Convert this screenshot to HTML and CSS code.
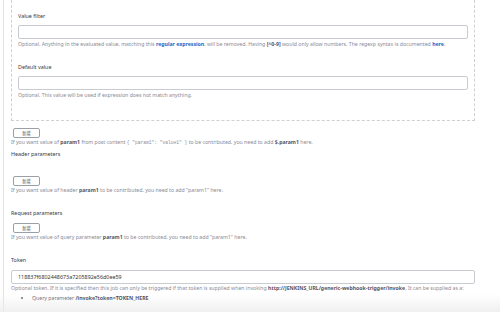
FILE: index.html
```html
<!DOCTYPE html>
<html>
<head>
	<title>Generic Webhook Trigger</title>
	<link rel="stylesheet" href="styles.css">
</head>
<body>
	<div class="page">
		<div class="variable-box">
			<div class="field">
				<div class="label">Value filter</div>
				<input class="text-input" type="text">
				<div class="help">Optional. Anything in the evaluated value, matching this <a href="#">regular expression</a>, will be removed. Having <b>[^0-9]</b> would only allow numbers. The regexp syntax is documented <a href="#">here</a>.</div>
			</div>
			<div class="field">
				<div class="label">Default value</div>
				<input class="text-input" type="text">
				<div class="help">Optional. This value will be used if expression does not match anything.</div>
			</div>
		</div>

		<div class="section first">
			<button class="add-btn">新增</button>
			<div class="help">If you want value of <b>param1</b> from post content <code>{ "param1": "value1" }</code> to be contributed, you need to add <b>$.param1</b> here.</div>
		</div>

		<div class="section header-params">
			<div class="label">Header parameters</div>
			<button class="add-btn">新增</button>
			<div class="help">If you want value of header <b>param1</b> to be contributed, you need to add "param1" here.</div>
		</div>

		<div class="section">
			<div class="label">Request parameters</div>
			<button class="add-btn">新增</button>
			<div class="help">If you want value of query parameter <b>param1</b> to be contributed, you need to add "param1" here.</div>
		</div>

		<div class="section token">
			<div class="label">Token</div>
			<input class="text-input" type="text" value="118837f6802448673a7205892e56d0ee59">
			<div class="help">Optional token. If it is specified then this job can only be triggered if that token is supplied when invoking <b>http://JENKINS_URL/generic-webhook-trigger/invoke</b>. It can be supplied as a:</div>
			<ul class="help-list">
				<li>Query parameter <b>/invoke?token=TOKEN_HERE</b></li>
			</ul>
		</div>
	</div>
	<div class="bottom-fade"></div>
</body>
</html>
```

FILE: styles.css
```css
body {
	margin: 0;
	background-color: #ffffff;
	font-family: "Noto Sans", "Noto Sans CJK SC", sans-serif;
	color: #333333;
	overflow: hidden;
}

.page {
	margin-left: 3px;
	border-left: 1px solid #e2e2e2;
	padding-left: 7px;
	padding-right: 25px;
	min-height: 312px;
}

.variable-box {
	border: 1px dashed #d0d0d0;
	border-top: none;
	padding: 13px 6px 21px 6px;
}

.field {
	margin-bottom: 16px;
}

.field:last-child {
	margin-bottom: 0;
}

.label {
	font-size: 5.4px;
	color: #3a3a3a;
	margin-bottom: 5px;
	line-height: 7px;
}

.text-input {
	display: block;
	box-sizing: border-box;
	width: 100%;
	height: 14px;
	margin: 0;
	border: 1px solid #c8ccd0;
	border-radius: 2px;
	padding: 0 6px;
	font-family: "Noto Sans", sans-serif;
	font-size: 5.4px;
	color: #333333;
	background: #ffffff;
}

.help {
	font-size: 5.2px;
	line-height: 7px;
	color: #8a8a96;
	margin-top: 2px;
	white-space: nowrap;
}

.help a {
	color: #1b6ac9;
	font-weight: bold;
	text-decoration: none;
}

.help b {
	color: #555566;
}

.help code {
	font-family: "Liberation Mono", monospace;
	font-size: 4.6px;
}

.section {
	margin-top: 16px;
}

.section .help {
	margin-top: 1px;
}

.section.first {
	margin-top: 7px;
}

.section.header-params {
	margin-top: 5px;
}

.section .label {
	margin-bottom: 6px;
}

.section.header-params .label {
	margin-bottom: 18px;
}

.add-btn {
	display: block;
	box-sizing: border-box;
	width: 27px;
	height: 10px;
	margin: 0 0 0 2px;
	padding: 0;
	border: 1px solid #9aa0a8;
	border-radius: 2px;
	background-color: #ffffff;
	font-family: "Noto Sans CJK SC", sans-serif;
	font-size: 4.2px;
	color: #555555;
	cursor: pointer;
}

.help-list {
	margin: 3px 0 0 0;
	padding-left: 21px;
	font-size: 5.2px;
	line-height: 7px;
	color: #555566;
}

.help-list b {
	color: #333344;
}

.bottom-fade {
	position: absolute;
	left: 0;
	right: 0;
	top: 294px;
	height: 18px;
	background: linear-gradient(to bottom, rgba(240, 240, 242, 0), rgba(236, 236, 238, 0.8));
	pointer-events: none;
}
```
